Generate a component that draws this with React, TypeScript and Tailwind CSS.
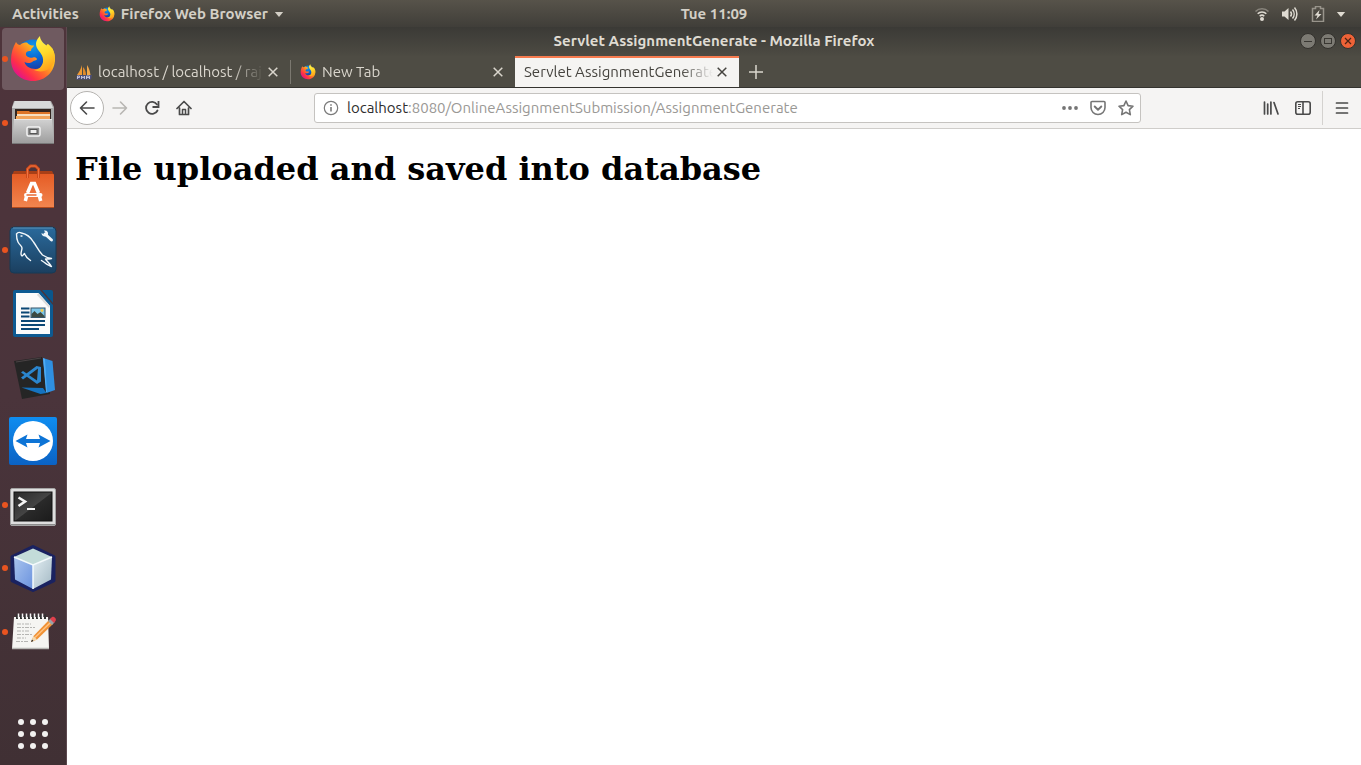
import { useState } from "react";
import type { ReactNode } from "react";

function FirefoxLogo({ className, id }: { className: string; id: string }) {
  return (
    <svg viewBox="0 0 48 48" className={className} aria-hidden="true">
      <defs>
        <linearGradient id={`${id}-tail`} x1="0.85" y1="0.1" x2="0.1" y2="0.8">
          <stop offset="0" stopColor="#ffe226" />
          <stop offset="0.3" stopColor="#ffb01e" />
          <stop offset="0.55" stopColor="#ff6a2b" />
          <stop offset="0.8" stopColor="#ff2f49" />
          <stop offset="1" stopColor="#e31587" />
        </linearGradient>
        <radialGradient id={`${id}-globe`} cx="0.5" cy="0.2" r="0.8">
          <stop offset="0" stopColor="#1399e8" />
          <stop offset="0.5" stopColor="#0860d0" />
          <stop offset="1" stopColor="#2a2a8a" />
        </radialGradient>
        <linearGradient id={`${id}-flame`} x1="0.3" y1="0" x2="0.6" y2="1">
          <stop offset="0" stopColor="#fff44f" />
          <stop offset="0.5" stopColor="#ffd92a" />
          <stop offset="1" stopColor="#ff9d1a" />
        </linearGradient>
      </defs>
      <circle cx="24" cy="22" r="17.5" fill={`url(#${id}-globe)`} />
      <path
        d="M7 7C4 12 2 18 2 25c0 12 9.500 21 22 21s22-9.500 22-22c0-5-1.500-9-3.500-12 .5 5 0 9-2 12-3 7-7 10-14 10-6 0-10-3-11-7 3 2 7 1 9-1l3-1c1-1 0-2-1-2.500-2-1-3 1-6 0-3-.5-4-2.500-3.500-4.500 1-2 3-2 5-2 0-3 3-4 3-5.500-3 0-5-.5-7-3-3 0-5 .5-7 2.500C9.500 10 8 9 7 7z"
        fill={`url(#${id}-tail)`}
      />
      <path
        d="M31 1c-4 4-5 8-3 12 2 4 7 7 6 14-1 5-5 8-9 8 9 4 18-1 20.500-9C47 18 43 12 39 9c-1 0-1 1-1.500 1.500C34 8 31 5 31 1z"
        fill={`url(#${id}-flame)`}
      />
    </svg>
  );
}

function FilesIcon() {
  return (
    <svg viewBox="0 0 48 48" className="size-12" aria-hidden="true">
      <defs>
        <linearGradient id="files-front" x1="0" y1="0" x2="0" y2="1">
          <stop offset="0" stopColor="#d2d2d2" />
          <stop offset="1" stopColor="#9c9c9c" />
        </linearGradient>
      </defs>
      <path d="M5 2h37l3 6v37H3V8z" fill="#a9a9a9" />
      <path d="M6 2h35l3 7H3z" fill="#d9d9d9" />
      <rect x="6" y="10" width="36" height="11" fill="#33251f" />
      <path d="M8 12h12l1 1h20v8H8z" fill="#dd7427" />
      <path d="M8 15h33v2H8z" fill="#f7dfc0" />
      <path d="M7 17h34v4H7z" fill="#f2a45a" />
      <path d="M5 20h38l2 25H3z" fill="url(#files-front)" />
      <path d="M5 20.500h38" stroke="#e8e8e8" />
      <path d="M3 44.500h42" stroke="#787878" />
      <rect x="18" y="28" width="13" height="9" rx="1.500" fill="#8d8d8d" stroke="#f4f4f4" strokeWidth="1.500" />
      <rect x="21" y="30.500" width="7" height="4" fill="#eee" stroke="#555" />
    </svg>
  );
}

function SoftwareIcon() {
  return (
    <svg viewBox="0 0 48 48" className="size-12" aria-hidden="true">
      <defs>
        <linearGradient id="bag" x1="0" y1="0" x2="0" y2="1">
          <stop offset="0" stopColor="#e55c25" />
          <stop offset="1" stopColor="#f28650" />
        </linearGradient>
      </defs>
      <path d="M5 9h38l2 4H3z" fill="#a83f17" />
      <rect x="3" y="12" width="42" height="34" rx="1" fill="url(#bag)" />
      <path d="M3 45.500h42" stroke="#b24a1c" />
      <path d="M18.500 16V7l3-3h5l3 3v9" fill="none" stroke="#cf4a1a" strokeWidth="3" />
      <path d="M18.500 16V7l3-3h5l3 3v9" fill="none" stroke="#ee7443" />
      <path d="M18.500 31l4-9.500h3l4 9.500M17.500 34.500L16.300 39M30.500 34.500l1.200 4.500" fill="none" stroke="#fff" strokeWidth="3.500" />
      <path d="M17 33h14.500" stroke="#fff" strokeWidth="4" strokeLinecap="round" />
      <path d="M17.500 33h10" stroke="#e86a33" strokeWidth="1.500" />
    </svg>
  );
}

function WorkbenchIcon() {
  return (
    <svg viewBox="0 0 48 48" className="size-12" aria-hidden="true">
      <defs>
        <linearGradient id="wb" x1="0" y1="0" x2="0" y2="1">
          <stop offset="0" stopColor="#2a6a9c" />
          <stop offset="1" stopColor="#1b3f5f" />
        </linearGradient>
      </defs>
      <rect x="1" y="1" width="46" height="46" rx="4" fill="url(#wb)" stroke="#173a56" />
      <path d="M4 2h40" stroke="#5b93ba" />
      <path
        d="M7.500 8c1-1.500 3-2 5-1 5 1 9 4 12 9 3 4 5 9 9 13 3 2 5 3 9 3.500-2 .5-4 .5-6 .5 2 3 4 4 6 7.500-2-1-5-2-7-4l-3-2M7.500 8c0 3 0 5 1.500 8s4 4 4 6c0 3-2 5-.5 7.500 1 1 2-1 3-2 1 3 3 5 6 7M12 10h1"
        fill="none"
        stroke="#f2f7fa"
        strokeWidth="1.400"
        strokeLinejoin="round"
        strokeLinecap="round"
      />
      <path d="M36 8l6.500 6" stroke="#f2f7fa" strokeWidth="3" strokeLinecap="round" />
      <path d="M35 4.500l1.500 2.500-1.500 1.500-2.500-1.500c0 2.500 2 4 4.500 3.500L39 8.500C39.500 6 38 4 35 4.500z" fill="#f2f7fa" />
    </svg>
  );
}

function WriterIcon() {
  return (
    <svg viewBox="0 0 48 48" className="size-12" aria-hidden="true">
      <path d="M6 0h25l13 15v30a2 2 0 0 1-2 2H6a2 2 0 0 1-2-2V2a2 2 0 0 1 2-2z" fill="#0d5a92" />
      <path d="M33 0h9a2 2 0 0 1 2 2v11z" fill="#0a568c" />
      <path d="M7 3h22.500L41 16v28H7z" fill="#fbfbfb" />
      <path d="M29.500 3L41 16l-1 2L28 5z" fill="#dcdcdc" />
      <path d="M12 18.500h8.500M12 22.500h8.500M12 26.500h8.500M12 31h24M12 35h24M12 39h18" stroke="#0b4775" strokeWidth="2" />
      <rect x="22" y="18" width="14" height="9.500" fill="#7cc6e8" stroke="#35556a" />
      <path d="M22.500 27v-3l3-3 3 3 3-2 4 4v1z" fill="#3c4a42" />
      <circle cx="33" cy="20.500" r="1.400" fill="#f4c948" />
    </svg>
  );
}

function CodeIcon() {
  return (
    <svg viewBox="0 0 48 48" className="size-12" aria-hidden="true">
      <path d="M5 8L33 4l8 37-28 5z" fill="#252525" />
      <path d="M7 9l25-4" stroke="#4a4345" />
      <path d="M34 5l9.500 3L46 37l-8.500 3z" fill="#2f8fe0" />
      <path d="M34 5l2 1 2 33-1 .500z" fill="#4eacf3" />
      <path d="M12.500 34.500L34 35l3.500 5-6 1z" fill="#1573c0" />
      <path d="M29 15.500L14 26.500l-2-2L27.500 13l4.500 1v14.500L28 31 12 19.500l2-1.500 14 9.500z" fill="#2b86cf" />
    </svg>
  );
}

function TeamViewerIcon() {
  return (
    <svg viewBox="0 0 48 48" className="size-12" aria-hidden="true">
      <defs>
        <linearGradient id="tv" x1="0" y1="0" x2="0" y2="1">
          <stop offset="0" stopColor="#0f8df0" />
          <stop offset="1" stopColor="#0b62c4" />
        </linearGradient>
      </defs>
      <rect width="48" height="48" rx="2" fill="url(#tv)" />
      <circle cx="24" cy="24" r="20" fill="#fff" />
      <path d="M6.500 24L18.500 17.500l-1.500 4.500h14l-1.500-4.500L41.500 24l-12 6.500L31 26H17l1.500 4.500z" fill="#0d74d6" />
    </svg>
  );
}

function TerminalIcon() {
  return (
    <svg viewBox="0 0 48 48" className="size-12" aria-hidden="true">
      <defs>
        <linearGradient id="term" x1="0" y1="0" x2="1" y2="1">
          <stop offset="0" stopColor="#2a2a2a" />
          <stop offset="0.500" stopColor="#444444" />
          <stop offset="0.520" stopColor="#2a2a2a" />
          <stop offset="1" stopColor="#1b1b1b" />
        </linearGradient>
      </defs>
      <rect x="1.500" y="7.500" width="45" height="37" rx="1.500" fill="#dedede" stroke="#a4a4a4" />
      <path d="M2 43.500h44" stroke="#8c8c8c" />
      <rect x="5" y="11" width="38" height="29" fill="url(#term)" stroke="#111" />
      <path d="M9.500 16.500l6.500 4-6.500 4.500" fill="none" stroke="#f4f4f4" strokeWidth="2.600" />
      <path d="M18 28h8" stroke="#f4f4f4" strokeWidth="2" />
    </svg>
  );
}

function NetBeansIcon() {
  return (
    <svg viewBox="0 0 48 48" className="size-12" aria-hidden="true">
      <defs>
        <linearGradient id="nb-left" x1="0" y1="0" x2="1" y2="1">
          <stop offset="0" stopColor="#a9c4ee" />
          <stop offset="1" stopColor="#6a92de" />
        </linearGradient>
        <linearGradient id="nb-right" x1="0" y1="0" x2="1" y2="1">
          <stop offset="0" stopColor="#e2edf2" />
          <stop offset="1" stopColor="#a3b9c4" />
        </linearGradient>
      </defs>
      <path d="M24 3L44.500 13v23.500L24 46 3.500 36.500V13z" fill="#1a2260" stroke="#1a2260" strokeWidth="4" strokeLinejoin="round" />
      <path d="M24 4.500l19 8.500-19 8L5 13z" fill="#c3dcd9" />
      <path d="M5 13l19 8v24L6 35.500z" fill="url(#nb-left)" />
      <path d="M24 21l19-8-1 22.500L24 45z" fill="url(#nb-right)" />
      <path d="M5 13l19 8 19-8M24 21v24" fill="none" stroke="#f4fafc" strokeWidth="1.500" />
    </svg>
  );
}

function NotesIcon() {
  return (
    <svg viewBox="0 0 48 48" className="size-12" aria-hidden="true">
      <path d="M5 9h34l1 32H3z" fill="#f5f5f2" />
      <path d="M3 40.500h37" stroke="#b8b8b4" strokeWidth="1.500" />
      <path
        d="M8 11V6.500M12 11V6.500M16 11V6.500M20 11V6.500M24 11V6.500M28 11V6.500M32 11V6.500M36 11V6.500"
        stroke="#333"
        strokeWidth="2"
      />
      <path
        d="M9.500 10V5.500M13.500 10V5.500M17.500 10V5.500M21.500 10V5.500M25.500 10V5.500M29.500 10V5.500M33.500 10V5.500"
        stroke="#f5f5f5"
        strokeWidth="1.500"
      />
      <path d="M8 16h14M8 19.500h18M8 23h12M8 26.500h16M8 30h9M7 33.500h13" stroke="#b5b5b2" strokeDasharray="4 1 2 1" />
      <path d="M22 34l2.500-6L40 12l4 4-16 15.500z" fill="#f09235" />
      <path d="M26 29.500L42 14" stroke="#ffc382" strokeWidth="1.500" />
      <path d="M22 34l2.500-6 3.500 3.500z" fill="#f3d9ae" />
      <path d="M22 34l1-2.500 1.500 1.500z" fill="#222" />
      <path d="M39 13l2.500-2.500 4 4L43 17z" fill="#9aa3a8" />
      <path d="M41 11l2-2c2-1 5 2 3.500 4L45 15z" fill="#e0404c" />
    </svg>
  );
}

type DockItem = { name: string; icon: ReactNode; running?: boolean; active?: boolean };

const dockItems: DockItem[] = [
  { name: "Firefox Web Browser", icon: <FirefoxLogo id="dock" className="size-12" />, running: true, active: true },
  { name: "Files", icon: <FilesIcon />, running: true },
  { name: "Ubuntu Software", icon: <SoftwareIcon /> },
  { name: "MySQL Workbench", icon: <WorkbenchIcon />, running: true },
  { name: "LibreOffice Writer", icon: <WriterIcon /> },
  { name: "Visual Studio Code", icon: <CodeIcon /> },
  { name: "TeamViewer", icon: <TeamViewerIcon /> },
  { name: "Terminal", icon: <TerminalIcon />, running: true },
  { name: "NetBeans", icon: <NetBeansIcon />, running: true },
  { name: "Text Editor", icon: <NotesIcon />, running: true },
];

function TopBar() {
  return (
    <header className="grid h-[27px] shrink-0 grid-cols-[1fr_auto_1fr] items-center bg-linear-to-b from-[#57534a] to-[#403e39] pt-px text-[15px] font-bold text-[#d3cfc6]">
      <div className="flex items-center gap-5 pl-3">
        <button type="button">Activities</button>
        <button type="button" className="flex items-center gap-1.5">
          <FirefoxLogo id="menu" className="size-4" />
          <span>Firefox Web Browser</span>
          <svg viewBox="0 0 10 6" className="h-[5px] w-[10px]" aria-hidden="true">
            <path d="M0 0h10L5 6z" fill="currentColor" />
          </svg>
        </button>
      </div>
      <button type="button" className="pl-[67px]">Tue 11:09</button>
      <button type="button" aria-label="System menu" className="flex items-center gap-3 justify-self-end pr-[15px]">
        <svg viewBox="0 0 16 16" className="size-4" aria-hidden="true" fill="none" strokeWidth="1.600">
          <path d="M1.500 5.500a9.200 9.200 0 0 1 13 0" stroke="#88847c" />
          <path d="M3.700 7.800a6 6 0 0 1 8.600 0M5.700 10.200a3.300 3.300 0 0 1 4.600 0" stroke="#dfdbd2" />
          <circle cx="8" cy="13" r="2" fill="#dfdbd2" />
        </svg>
        <svg viewBox="0 0 16 16" className="size-4" aria-hidden="true" fill="none" stroke="#dfdbd2" strokeWidth="1.500">
          <path d="M0 5.500h2.500L6.500 2v12l-4-3.500H0z" fill="#dfdbd2" stroke="none" />
          <path d="M8.500 5.500a4 4 0 0 1 0 5M10.500 3.500a7 7 0 0 1 0 9M12.500 1.500a10 10 0 0 1 0 13" />
        </svg>
        <svg viewBox="0 0 16 16" className="size-4" aria-hidden="true">
          <path d="M5.500 2.500v-2h5v2h3v13h-11v-13z" fill="none" stroke="#98948b" strokeWidth="1.500" />
          <path d="M9.500 4L4.500 9.500h3L6 13.500 11.500 8h-3z" fill="#dfdbd2" />
        </svg>
        <svg viewBox="0 0 10 6" className="-ml-0.5 h-[5px] w-[10px]" aria-hidden="true">
          <path d="M0 0h10L5 6z" fill="#dfdbd2" />
        </svg>
      </button>
    </header>
  );
}

function Dock() {
  return (
    <nav
      aria-label="Dock"
      className="flex w-[67px] shrink-0 flex-col justify-between border-r border-[#5d494f] bg-linear-to-b from-[#4e343b] via-[#4a343b] to-[#403034]"
    >
      <ul className="flex h-[637px] flex-col">
        {dockItems.map((item) => (
          <li key={item.name} className="relative flex flex-1 items-center justify-center">
            <button
              type="button"
              aria-label={item.name}
              className={
                item.active
                  ? "flex h-[62px] w-[62px] items-center justify-center rounded bg-[#6f5a60]"
                  : "flex h-[62px] w-[62px] items-center justify-center rounded"
              }
            >
              {item.icon}
            </button>
            {item.running && <span className="absolute left-0.5 size-1.5 rounded-full bg-[#e95420]" />}
          </li>
        ))}
      </ul>
      <button type="button" aria-label="Show Applications" className="mb-4 grid grid-cols-3 gap-1.5 self-center">
        {Array.from({ length: 9 }, (_, i) => (
          <span key={i} className="size-1.5 rounded-full bg-[#f2f1f0]" />
        ))}
      </button>
    </nav>
  );
}

function CloseGlyph() {
  return (
    <svg viewBox="0 0 10 10" className="size-2.5" aria-hidden="true">
      <path d="M.700.700l8.600 8.600M9.300.700L.700 9.300" stroke="currentColor" strokeWidth="1.500" />
    </svg>
  );
}

function SailIcon() {
  return (
    <svg viewBox="0 0 16 16" className="size-4 shrink-0" aria-hidden="true">
      <path d="M6 1v10H1C3 8 5 5 6 1z" fill="#f09a35" />
      <path d="M7 3c2 2 3 5 3 8H7z" fill="#e08a2b" />
      <path d="M11 1c2 3 3 6 3.500 10H11z" fill="#f4a94a" />
      <path d="M1 11h15l-1 4.500H0z" fill="#4d4f78" />
      <path d="M1.500 15v-3h2v1.500h-2M5.500 15v-3l1.500 2 1.500-2v3M10.500 15v-3h3v3M10.500 13.500h3" stroke="#d8d8ea" strokeWidth="0.800" fill="none" />
    </svg>
  );
}

function Tab({ title, icon, active, divider }: { title: string; icon?: ReactNode; active?: boolean; divider?: boolean }) {
  return (
    <div
      className={
        active
          ? "flex w-[224px] items-center border-t-2 border-[#f77b4f] bg-[#f5f4f2] pr-3 pb-px pl-[9px] text-[#45433e]"
          : "flex w-[224px] items-center pt-0.5 pr-3 pb-px pl-[9px] text-[#dad6cd]"
      }
    >
      <button type="button" role="tab" aria-selected={!!active} className="flex min-w-0 flex-1 items-center gap-1.5">
        {icon}
        <span className="min-w-0 flex-1 overflow-hidden text-left whitespace-nowrap [mask-image:linear-gradient(to_left,transparent,black_32px)]">
          {title}
        </span>
      </button>
      <button type="button" aria-label={`Close ${title}`} className="ml-1">
        <CloseGlyph />
      </button>
      {divider && <span className="-mr-3 ml-3 h-6 w-px bg-[#7b7870]" />}
    </div>
  );
}

function WindowButtons() {
  const shape = "flex size-4 items-center justify-center rounded-full border border-[#33312d]";
  return (
    <div className="flex items-center gap-1 justify-self-end pr-[5px]">
      <button type="button" aria-label="Minimize" className={`${shape} bg-[#7c7a73] text-[#393732]`}>
        <svg viewBox="0 0 10 10" className="size-2.5" aria-hidden="true">
          <path d="M1 5.500h8" stroke="currentColor" />
        </svg>
      </button>
      <button type="button" aria-label="Maximize" className={`${shape} bg-[#7c7a73] text-[#393732]`}>
        <svg viewBox="0 0 10 10" className="size-2.5" aria-hidden="true">
          <rect x="1.500" y="2.500" width="7" height="5" fill="none" stroke="currentColor" />
        </svg>
      </button>
      <button type="button" aria-label="Close" className={`${shape} bg-[#ee6237] text-[#4b2415]`}>
        <svg viewBox="0 0 10 10" className="size-2.5" aria-hidden="true">
          <path d="M2 2l6 6M8 2l-6 6" stroke="currentColor" strokeWidth="1.200" />
        </svg>
      </button>
    </div>
  );
}

function Toolbar() {
  const [editing, setEditing] = useState(false);
  const [address, setAddress] = useState("localhost:8080/OnlineAssignmentSubmission/AssignmentGenerate");
  const slash = address.search(/[:/]/);
  const host = slash < 0 ? address : address.slice(0, slash);
  const rest = slash < 0 ? "" : address.slice(slash);

  return (
    <div className="flex h-[41px] shrink-0 items-center border-b border-[#cfcdca] bg-[#f5f4f3] pl-[3px] text-[#4a4a4a]">
      <div className="flex items-center">
        <button
          type="button"
          aria-label="Back"
          className="flex size-[34px] items-center justify-center rounded-full border border-[#b5b3b0] bg-white"
        >
          <svg viewBox="0 0 16 16" className="size-4" fill="none" stroke="currentColor" strokeWidth="1.600" strokeLinecap="round" strokeLinejoin="round" aria-hidden="true">
            <path d="M15 8H1.500M7.500 2l-6 6 6 6" />
          </svg>
        </button>
        <button type="button" aria-label="Forward" disabled className="flex w-8 justify-center text-[#b8b6b3]">
          <svg viewBox="0 0 16 16" className="size-4" fill="none" stroke="currentColor" strokeWidth="1.600" strokeLinecap="round" strokeLinejoin="round" aria-hidden="true">
            <path d="M1 8h13.500M8.500 2l6 6-6 6" />
          </svg>
        </button>
        <button type="button" aria-label="Reload" className="flex w-8 justify-center">
          <svg viewBox="0 0 16 16" className="size-4" fill="none" stroke="currentColor" strokeWidth="1.800" aria-hidden="true">
            <path d="M13.500 10.500A6 6 0 1 1 13 4.500" strokeLinecap="round" />
            <path d="M14.500 1v6H8.500" />
          </svg>
        </button>
        <button type="button" aria-label="Home" className="flex w-[31px] justify-center">
          <svg viewBox="0 0 16 16" className="size-4" fill="none" stroke="currentColor" strokeWidth="1.700" strokeLinecap="round" strokeLinejoin="round" aria-hidden="true">
            <path d="M1 8.500l7-7 7 7M3.500 8v6.500h9V8" />
            <path d="M6.500 14V9.500h3V14" strokeWidth="1.500" />
          </svg>
        </button>
      </div>

      <div className="mr-[122px] ml-[115px] flex h-[30px] min-w-0 flex-1 items-center rounded-[3px] border border-[#c5c3c0] bg-white pr-1.5 pl-2">
        <svg viewBox="0 0 16 16" className="size-4 shrink-0" fill="none" stroke="#7a7a7a" aria-hidden="true">
          <circle cx="8" cy="8" r="6.700" strokeWidth="1.200" />
          <path d="M8 7v4.500M8 4.300v1.500" strokeWidth="1.600" />
        </svg>
        {editing ? (
          <input
            aria-label="Address"
            autoFocus
            value={address}
            onChange={(e) => setAddress(e.target.value)}
            onBlur={() => setEditing(false)}
            className="ml-2 min-w-0 flex-1 text-[15px] outline-none"
          />
        ) : (
          <button
            type="button"
            onClick={() => setEditing(true)}
            className="ml-2 min-w-0 flex-1 cursor-text truncate text-left text-[15px] text-[#9a9895]"
          >
            <span className="text-[#2e2e2e]">{host}</span>
            {rest}
          </button>
        )}
        <div className="flex items-center gap-3 text-[#757575]">
          <button type="button" aria-label="Page actions">
            <svg viewBox="0 0 16 16" className="size-4" fill="currentColor" aria-hidden="true">
              <circle cx="2" cy="8" r="1.900" />
              <circle cx="8" cy="8" r="1.900" />
              <circle cx="14" cy="8" r="1.900" />
            </svg>
          </button>
          <button type="button" aria-label="Save to Pocket">
            <svg viewBox="0 0 16 16" className="size-4" fill="none" stroke="currentColor" strokeWidth="1.600" strokeLinecap="round" strokeLinejoin="round" aria-hidden="true">
              <path d="M2 1.500h12a1 1 0 0 1 1 1v5a7 7 0 0 1-14 0v-5a1 1 0 0 1 1-1z" />
              <path d="M4.700 6.500L8 9.700l3.300-3.200" strokeWidth="1.900" />
            </svg>
          </button>
          <button type="button" aria-label="Bookmark this page">
            <svg viewBox="0 0 16 16" className="size-4" fill="none" stroke="currentColor" strokeWidth="1.600" strokeLinejoin="round" aria-hidden="true">
              <path d="M8 1l2.100 4.600 4.900.600-3.600 3.400.900 5L8 12.200l-4.300 2.400.900-5L1 6.200l4.900-.600z" />
            </svg>
          </button>
        </div>
      </div>

      <div className="flex h-full items-center">
        <button type="button" aria-label="Library" className="mr-4">
          <svg viewBox="0 0 16 16" className="size-4" fill="none" stroke="currentColor" strokeWidth="1.700" strokeLinecap="round" aria-hidden="true">
            <path d="M1.500 2v12M4.700 4v10M7.900 2v12M11 2.500L15 14" />
          </svg>
        </button>
        <button type="button" aria-label="Sidebars" className="mr-[11px]">
          <svg viewBox="0 0 16 16" className="size-4" fill="none" stroke="currentColor" strokeWidth="1.600" aria-hidden="true">
            <rect x="0.800" y="1.800" width="14.400" height="12.400" rx="2" />
            <path d="M8 2v12" />
            <path d="M3 4.500h3M3 6.500h3M3 8.500h2" strokeWidth="1" />
          </svg>
        </button>
        <span className="h-[34px] w-px bg-[#d4d2cf]" />
        <button type="button" aria-label="Open menu" className="mx-[11px]">
          <svg viewBox="0 0 16 16" className="size-4" fill="none" stroke="currentColor" strokeWidth="1.700" strokeLinecap="round" aria-hidden="true">
            <path d="M2.500 3h11M2.500 8h11M2.500 13h11" />
          </svg>
        </button>
      </div>
    </div>
  );
}

export default function App() {
  return (
    <div className="flex min-h-screen flex-col bg-white font-['Ubuntu','Noto_Sans',sans-serif]">
      <TopBar />
      <div className="flex flex-1">
        <Dock />
        <div className="flex min-w-0 flex-1 flex-col">
          <div className="grid h-[29px] shrink-0 grid-cols-[1fr_auto_1fr] items-center bg-linear-to-b from-[#3b3a36] to-[#4d4b43] pb-px">
            <span />
            <span className="text-[15px] font-bold text-[#dfdbd2]">Servlet AssignmentGenerate - Mozilla Firefox</span>
            <WindowButtons />
          </div>
          <div role="tablist" className="flex h-8 shrink-0 border-b border-[#34332f] bg-[#4e4c44] text-[15px]">
            <Tab title="localhost / localhost / raj" icon={<SailIcon />} divider />
            <Tab title="New Tab" icon={<FirefoxLogo id="tab" className="size-4 shrink-0" />} />
            <Tab title="Servlet AssignmentGenerate" active />
            <button type="button" aria-label="Open a new tab" className="px-2.5 text-[#dad6cd]">
              <svg viewBox="0 0 14 14" className="size-3.5" aria-hidden="true">
                <path d="M7 0v14M0 7h14" stroke="currentColor" strokeWidth="1.500" />
              </svg>
            </button>
          </div>
          <Toolbar />
          <main className="flex-1 bg-white px-2 pt-5">
            <h1 className="font-['DejaVu_Serif',serif] text-[32px] leading-10 font-bold text-black">
              File uploaded and saved into database
            </h1>
          </main>
        </div>
      </div>
    </div>
  );
}
